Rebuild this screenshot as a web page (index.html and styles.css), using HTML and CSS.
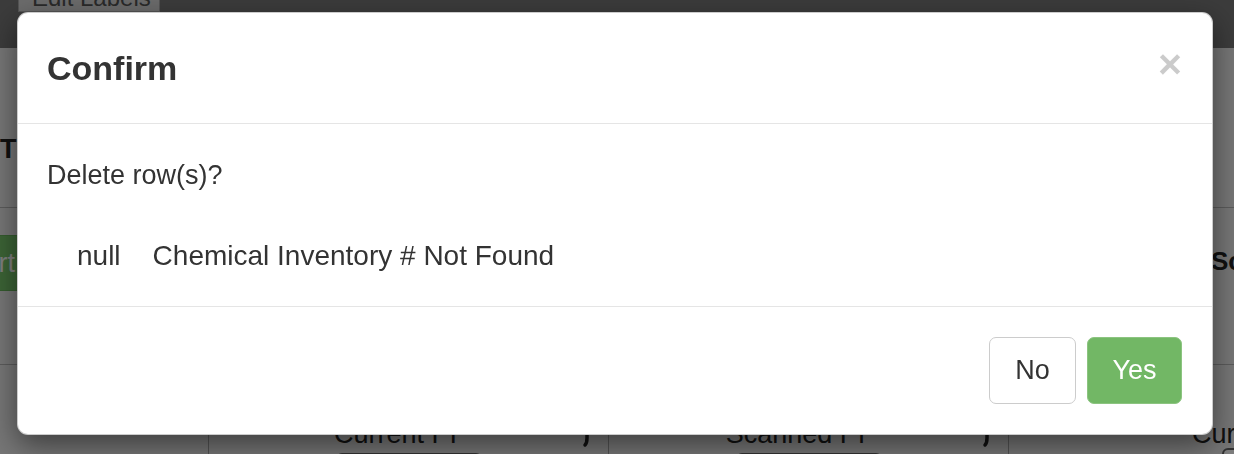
FILE: index.html
```html
<!DOCTYPE html>
<html lang="en">
<head>
    <meta charset="UTF-8">
    <meta name="viewport" content="width=device-width, initial-scale=1.0">
    <title>Inventory Scan</title>
    <link rel="stylesheet" href="styles.css">
</head>
<body>

    <!-- Top bar -->
    <nav class="navbar">
        <button class="nav-btn">Edit Labels</button>
    </nav>

    <!-- Page heading -->
    <section class="page-head">
        <h2 class="page-title">TITLE</h2>
    </section>

    <!-- Toolbar -->
    <section class="toolbar">
        <div><button class="btn-start">Start</button></div>
        <h3 class="side-title">Scanned Items</h3>
    </section>

    <!-- Table header -->
    <div class="table-head">
        <div class="th"></div>
        <div class="th">
            <div class="th-top">
                <span class="th-label">Current PI</span>
                <span class="sort-icon">
                    <svg width="10" height="30" viewBox="0 0 10 30"><path d="M5 4 V20 Q5 25 3 27" fill="none" stroke="#222" stroke-width="3.5" stroke-linecap="round"/></svg>
                </span>
            </div>
            <input class="th-input" type="text">
        </div>
        <div class="th">
            <div class="th-top">
                <span class="th-label">Scanned PI</span>
                <span class="sort-icon">
                    <svg width="10" height="30" viewBox="0 0 10 30"><path d="M5 4 V20 Q5 25 3 27" fill="none" stroke="#222" stroke-width="3.5" stroke-linecap="round"/></svg>
                </span>
            </div>
            <input class="th-input" type="text">
        </div>
        <div class="th th-last">
            <div class="th-top">
                <span class="th-label-left">Current Location</span>
            </div>
            <input class="th-input th-input-left" type="text">
        </div>
    </div>

    <!-- Confirm dialog -->
    <div class="backdrop"></div>
    <div class="modal">
        <div class="modal-dialog">
            <div class="modal-header">
                <h4 class="modal-title">Confirm</h4>
                <button class="close">&times;</button>
            </div>
            <div class="modal-body">
                <p>Delete row(s)?</p>
                <div class="del-row">
                    <span>null</span>
                    <span>Chemical Inventory # Not Found</span>
                </div>
            </div>
            <div class="modal-footer">
                <button class="btn btn-default">No</button>
                <button class="btn btn-success">Yes</button>
            </div>
        </div>
    </div>

</body>
</html>
```

FILE: styles.css
```css
body {
    margin: 0;
    font-family: "Liberation Sans", Arial, sans-serif;
    font-size: 27px;
    color: #333;
    background: #eeeeee;
    overflow: hidden;
}
.navbar {
    display: flow-root;
    height: 48px;
    background: #787878;
    padding-left: 18px;
}
.nav-btn {
    display: block;
    margin-top: -26px;
    width: 142px;
    height: 38px;
    padding: 8px 13px 0;
    font-family: inherit;
    font-size: 24px;
    line-height: 30px;
    text-align: left;
    white-space: nowrap;
    color: #555;
    background: #d8d8d8;
    border: 1px solid #aaa;
}
.page-head {
    box-sizing: border-box;
    height: 160px;
    padding-top: 85px;
    border-bottom: 1px solid #b8b8b8;
}
.page-title {
    margin: 0;
    font-size: 27px;
    line-height: 32px;
    color: #222;
}
.toolbar {
    box-sizing: border-box;
    height: 157px;
    display: grid;
    grid-template-columns: 1211px 1fr;
    border-bottom: 1px solid #b8b8b8;
}
.btn-start {
    margin: 27px 0 0 -66px;
    height: 56px;
    padding: 0 23px;
    font-family: inherit;
    font-size: 27px;
    color: #fff;
    background: #78c86c;
    border: 1px solid #6ab85e;
    border-radius: 7px;
}
.side-title {
    margin: 37px 0 0;
    font-size: 26px;
    line-height: 32px;
    color: #222;
    white-space: nowrap;
}
.table-head {
    display: grid;
    grid-template-columns: 208px 400px 400px 1fr;
}
.th {
    padding-top: 53px;
    border-left: 1px solid #a8a8a8;
}
.th:first-child {
    border-left: 0;
}
.th-top {
    display: flex;
    line-height: 32px;
    color: #222;
}
.th-label {
    flex: 1;
    text-align: center;
}
.th-label-left {
    padding-left: 183px;
    white-space: nowrap;
}
.sort-icon {
    width: 26px;
}
.th-input {
    display: block;
    box-sizing: border-box;
    width: 146px;
    height: 36px;
    margin: -2px auto 0;
    border: 2px solid #666;
    border-radius: 6px;
    background: #fff;
}
.th-input-left {
    margin-left: 213px;
}

/* dialog */
.backdrop {
    position: fixed;
    top: 0;
    left: 0;
    right: 0;
    bottom: 0;
    background: rgba(0, 0, 0, 0.5);
}
.modal {
    position: fixed;
    top: 0;
    left: 0;
    right: 0;
    bottom: 0;
    padding: 12px 0 0 17px;
}
.modal-dialog {
    box-sizing: border-box;
    width: 1196px;
    background: #fff;
    border: 1px solid rgba(0, 0, 0, 0.2);
    border-radius: 11px;
    box-shadow: 0 10px 30px rgba(0, 0, 0, 0.5);
}
.modal-header {
    display: flex;
    justify-content: space-between;
    align-items: center;
    padding: 30px 30px 30px 29px;
    border-bottom: 1px solid #e5e5e5;
}
.modal-title {
    margin: 0;
    font-size: 34px;
    font-weight: bold;
    line-height: 50px;
}
.close {
    margin-top: -8px;
    padding: 0;
    font-family: inherit;
    font-size: 41px;
    font-weight: bold;
    line-height: 1;
    color: #000;
    opacity: 0.2;
    background: none;
    border: 0;
}
.modal-body {
    padding: 31px 29px 30px;
    line-height: 40px;
}
.modal-body p {
    margin: 0 0 41px;
}
.del-row {
    display: flex;
    gap: 32px;
    padding-left: 30px;
    font-size: 28px;
}
.modal-footer {
    display: flex;
    justify-content: flex-end;
    gap: 11px;
    padding: 30px;
    border-top: 1px solid #e5e5e5;
}
.btn {
    height: 67px;
    padding: 0;
    font-family: inherit;
    font-size: 27px;
    border-radius: 7px;
}
.btn-default {
    width: 87px;
    color: #333;
    background: #fff;
    border: 1px solid #ccc;
}
.btn-success {
    width: 95px;
    color: #fff;
    background: #72b765;
    border: 1px solid #8cc480;
}
```
